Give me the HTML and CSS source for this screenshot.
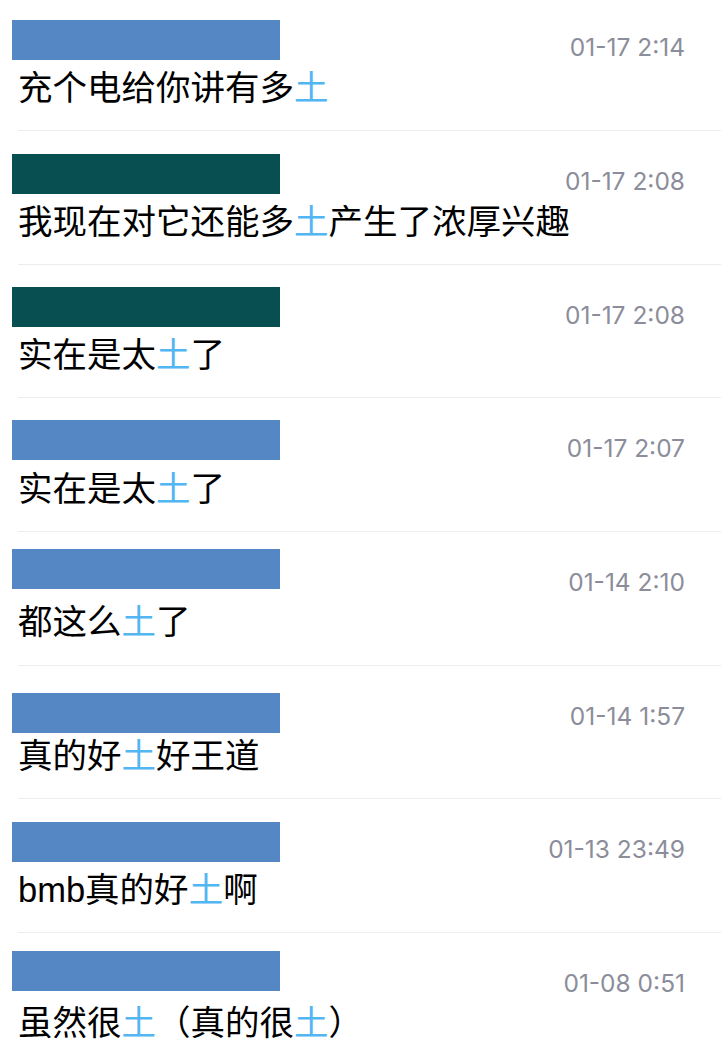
FILE: index.html
```html
<!DOCTYPE html>
<html lang="zh-CN">
<head>
<meta charset="utf-8">
<title>评论列表</title>
<link rel="stylesheet" href="styles.css">
</head>
<body>
<ul class="list">
  <li class="item">
    <div class="head"><span class="redact"></span><span class="time">01-17 2:14</span></div>
    <p class="msg">充个电给你讲有多<em class="hl">土</em></p>
  </li>
  <li class="item">
    <div class="head"><span class="redact redact--teal"></span><span class="time">01-17 2:08</span></div>
    <p class="msg">我现在对它还能多<em class="hl">土</em>产生了浓厚兴趣</p>
  </li>
  <li class="item">
    <div class="head"><span class="redact redact--teal redact--up1"></span><span class="time">01-17 2:08</span></div>
    <p class="msg">实在是太<em class="hl">土</em>了</p>
  </li>
  <li class="item">
    <div class="head"><span class="redact redact--up1"></span><span class="time">01-17 2:07</span></div>
    <p class="msg">实在是太<em class="hl">土</em>了</p>
  </li>
  <li class="item">
    <div class="head"><span class="redact redact--up6"></span><span class="time">01-14 2:10</span></div>
    <p class="msg">都这么<em class="hl">土</em>了</p>
  </li>
  <li class="item">
    <div class="head"><span class="redact redact--down4"></span><span class="time">01-14 1:57</span></div>
    <p class="msg">真的好<em class="hl">土</em>好王道</p>
  </li>
  <li class="item">
    <div class="head"><span class="redact"></span><span class="time">01-13 23:49</span></div>
    <p class="msg">bmb真的好<em class="hl">土</em>啊</p>
  </li>
  <li class="item">
    <div class="head"><span class="redact redact--up5"></span><span class="time">01-08 0:51</span></div>
    <p class="msg">虽然很<em class="hl">土</em>（真的很<em class="hl">土</em>）</p>
  </li>
</ul>
</body>
</html>
```
FILE: styles.css
```css
html, body {
  margin: 0;
  padding: 0;
  background: #ffffff;
}

body {
  font-family: "Liberation Sans", "Noto Sans CJK SC", sans-serif;
  color: #000000;
  overflow: hidden;
}

.list {
  list-style: none;
  margin: -2.67px 0 0 0;
  padding: 0 0 0 18px;
}

.item {
  border-bottom: 1px solid #ececf1;
  padding-bottom: 22.17px;
}

.head {
  display: flex;
  justify-content: space-between;
  align-items: flex-start;
  height: 70.5px;
  padding-right: 36px;
}

.redact {
  display: block;
  width: 268px;
  height: 40px;
  margin-left: -6px;
  margin-top: 23px;
  background: #5587c4;
}

.redact--teal {
  background: #074f51;
}

.redact--up1 {
  margin-top: 22px;
}

.redact--up5 {
  margin-top: 18px;
}

.redact--up6 {
  margin-top: 17px;
}

.redact--down4 {
  margin-top: 27px;
}

.time {
  display: block;
  margin-top: 36px;
  font-family: Inter, "Liberation Sans", sans-serif;
  font-size: 24.5px;
  line-height: 28px;
  color: #8b8d9a;
  white-space: nowrap;
}

.msg {
  margin: 0;
  font-size: 34.5px;
  line-height: 40px;
  white-space: nowrap;
}

.hl {
  font-style: normal;
  color: #52b6f3;
}
```
